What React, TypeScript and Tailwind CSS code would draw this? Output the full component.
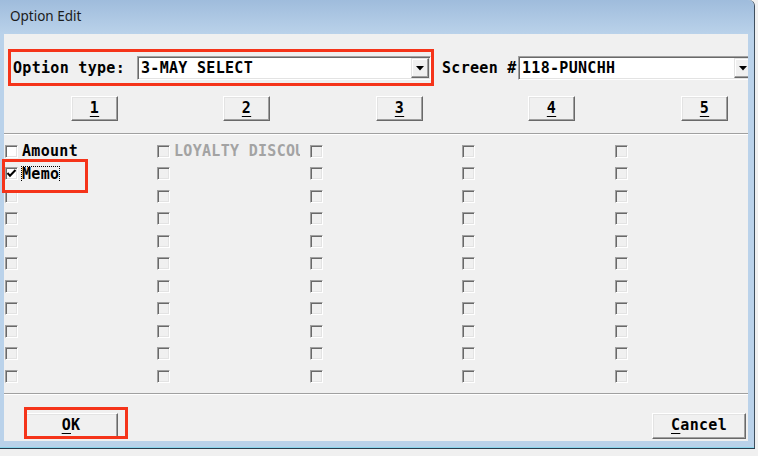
import React from 'react';

const mono = "font-['DejaVu_Sans_Mono',monospace] font-bold text-[15px] tracking-[0.3px]";

type Cell = { label?: string; checked?: boolean; disabled?: boolean; focused?: boolean };

const ROWS = 11;

const columns: Cell[][] = [
  [{ label: 'Amount' }, { label: 'Memo', checked: true, focused: true }],
  [{ label: 'LOYALTY DISCOUNT', disabled: true }],
  [],
  [],
  [],
];

const CheckBox: React.FC<{ checked?: boolean; white?: boolean }> = ({ checked, white }) => (
  <span
    className={`relative block w-[13px] h-[13px] shrink-0 border border-t-[#a0a0a0] border-l-[#a0a0a0] border-r-white border-b-white shadow-[inset_1px_1px_0_#696969,inset_-1px_-1px_0_#e3e3e3] ${
      white ? 'bg-white' : 'bg-[#f0f0f0]'
    }`}
  >
    {checked && (
      <svg className="absolute left-0 top-0" width="11" height="11" viewBox="0 0 11 11">
        <polyline points="1.5,5 4,7.8 9.5,2" fill="none" stroke="#000" strokeWidth="2" />
      </svg>
    )}
  </span>
);

const ClassicButton: React.FC<{ className?: string; children: React.ReactNode }> = ({ className = '', children }) => (
  <div
    className={`flex items-center justify-center bg-[#f0f0f0] border border-t-white border-l-white border-r-[#696969] border-b-[#696969] shadow-[inset_-1px_-1px_0_#a0a0a0,inset_1px_1px_0_#e3e3e3] text-black ${mono} ${className}`}
  >
    {children}
  </div>
);

const Combo: React.FC<{ value: string; className?: string }> = ({ value, className = '' }) => (
  <div
    className={`flex items-center h-[24px] bg-white border border-t-[#a0a0a0] border-l-[#a0a0a0] border-r-white border-b-white shadow-[inset_1px_1px_0_#696969,inset_-1px_-1px_0_#e3e3e3] ${className}`}
  >
    <span className={`flex-1 pl-[3px] whitespace-nowrap overflow-hidden text-black ${mono}`}>{value}</span>
    <div className="mr-[1px] w-[18px] h-[20px] flex items-center justify-center bg-[#f0f0f0] border border-t-[#e3e3e3] border-l-[#e3e3e3] border-r-[#696969] border-b-[#696969] shadow-[inset_-1px_-1px_0_#a0a0a0,inset_1px_1px_0_#fff]">
      <svg width="8" height="5" viewBox="0 0 8 5">
        <polygon points="0,0 8,0 4,4.5" fill="#000" />
      </svg>
    </div>
  </div>
);

export default function App() {
  return (
    <div className="relative w-[758px] h-[456px] bg-[#f0f0f0] flex flex-col overflow-hidden">
      <div className="flex">
        {/* dialog window */}
        <div className="w-[755px] flex flex-col bg-[#bad2ea] border-r border-r-[#3f4f5e] rounded-tr-[6px]">
          <div className="h-[34px] shrink-0 flex items-center pl-[10px] pb-[1px] bg-gradient-to-b from-[#9fbcdc] to-[#bad2ea] rounded-tr-[6px]">
            <span className="font-['Noto_Sans',sans-serif] text-[13.5px] text-[#1b1b1b]">Option Edit</span>
          </div>
          <div className="flex">
            <div className="w-[4px] shrink-0" />
            <div className="relative w-[744px] h-[407px] bg-[#f0f0f0] flex flex-col overflow-hidden">
              {/* header: option type + screen */}
              <div className="mt-[22px] h-[24px] flex items-center">
                <span className={`pl-[9px] w-[133px] shrink-0 whitespace-nowrap text-black ${mono}`}>Option type:</span>
                <Combo value="3-MAY SELECT" className="w-[294px] shrink-0" />
                <span className={`ml-[11px] w-[76px] shrink-0 whitespace-nowrap text-black ${mono}`}>Screen #</span>
                <Combo value="118-PUNCHH" className="w-[236px] shrink-0" />
              </div>

              {/* page buttons */}
              <div className="mt-[16px] grid grid-cols-[153px_153px_152px_153px_1fr]">
                {['1', '2', '3', '4', '5'].map((n, i) => (
                  <div key={n} className={i === 0 ? 'pl-[67px]' : 'pl-[66px]'}>
                    <ClassicButton className="w-[47px] h-[25px]">
                      <span className="underline underline-offset-[3px]">{n}</span>
                    </ClassicButton>
                  </div>
                ))}
              </div>

              <div className="mt-[12px] h-[2px] shrink-0 border-t border-t-[#a0a0a0] border-b border-b-white" />

              {/* option grid */}
              <div className="mt-[5px] grid grid-cols-[153px_153px_152px_153px_1fr]">
                {columns.map((col, ci) => (
                  <div key={ci} className="flex flex-col">
                    {Array.from({ length: ROWS }).map((_, ri) => {
                      const cell = col[ri] ?? {};
                      return (
                        <div key={ri} className={`h-[22.5px] flex items-center ${ci === 0 ? 'pl-[1px]' : ''}`}>
                          <CheckBox checked={cell.checked} white={!!cell.label && !cell.disabled} />
                          {cell.label && (
                            <span
                              className={`ml-[3px] w-[127px] overflow-hidden whitespace-nowrap leading-[16px] px-[1px] ${mono} ${
                                cell.disabled ? 'text-[#a3a3a3]' : 'text-black'
                              }`}
                            >
                              <span
                                className={`inline-block leading-[15px] ${
                                  cell.focused ? 'outline-1 outline-dotted outline-black' : ''
                                }`}
                              >
                                {cell.label}
                              </span>
                            </span>
                          )}
                        </div>
                      );
                    })}
                  </div>
                ))}
              </div>

              <div className="mt-[5px] h-[2px] shrink-0 border-t border-t-[#a0a0a0] border-b border-b-white" />

              {/* footer buttons */}
              <div className="mt-[18px] flex justify-between pl-[20px] pr-[2px]">
                <ClassicButton className="w-[94px] h-[26px]">
                  <span>
                    <span className="underline underline-offset-[3px]">O</span>K
                  </span>
                </ClassicButton>
                <ClassicButton className="w-[94px] h-[26px]">
                  <span>
                    <span className="underline underline-offset-[3px]">C</span>ancel
                  </span>
                </ClassicButton>
              </div>

              {/* red highlight marks */}
              <div className="absolute left-[4px] top-[15px] w-[426px] h-[37px] border-[3px] border-[#f5341a]" />
              <div className="absolute left-[20px] top-[373px] w-[104px] h-[32px] border-[3px] border-[#f5341a]" />
            </div>
            <div className="w-[6px] shrink-0" />
          </div>
          <div className="h-[6px] shrink-0" />
          <div className="h-px bg-[#8ad6ec]" />
        </div>
        <div className="flex-1 bg-[#f0f0f0]" />
      </div>
      <div className="h-px w-[755px] bg-[#2b3d4f]" />
      {/* memo highlight reaches past the client edge */}
      <div className="absolute left-[2px] top-[159px] w-[86px] h-[34px] border-[3px] border-[#f5341a]" />
    </div>
  );
}
